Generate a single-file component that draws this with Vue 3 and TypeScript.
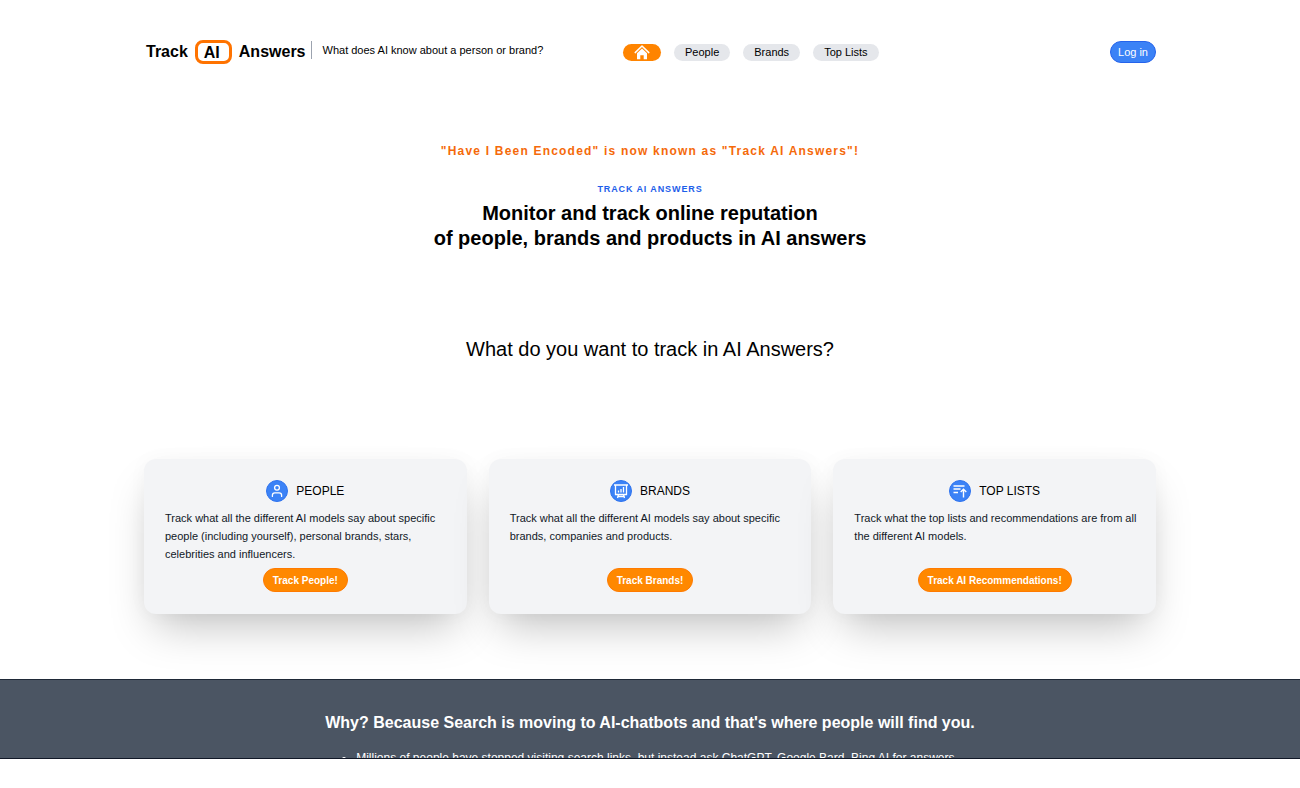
<script setup lang="ts">
interface Card {
  id: string
  title: string
  text: string
  action: string
}

const links: string[] = ['People', 'Brands', 'Top Lists']

const cards: Card[] = [
  {
    id: 'people',
    title: 'PEOPLE',
    text: 'Track what all the different AI models say about specific people (including yourself), personal brands, stars, celebrities and influencers.',
    action: 'Track People!',
  },
  {
    id: 'brands',
    title: 'BRANDS',
    text: 'Track what all the different AI models say about specific brands, companies and products.',
    action: 'Track Brands!',
  },
  {
    id: 'lists',
    title: 'TOP LISTS',
    text: 'Track what the top lists and recommendations are from all the different AI models.',
    action: 'Track AI Recommendations!',
  },
]
</script>

<template>
  <div class="page">
    <header class="header container">
      <div class="brand">
        <a class="logo" href="#"><span>Track</span><span class="logo-box">AI</span><span>Answers</span></a>
        <span class="tagline">What does AI know about a person or brand?</span>
      </div>
      <nav class="nav" aria-label="Main">
        <a class="pill pill-home" href="#" aria-label="Home">
          <svg width="16" height="16" viewBox="0 0 16 16" aria-hidden="true">
            <path d="M1.200 8.600 8 2l6.800 6.600" fill="none" stroke="#fff" stroke-width="1.500" stroke-linecap="round" stroke-linejoin="round" />
            <path d="M3 9.200 8 4.400l5 4.800V15.200H9.700v-4H6.300v4H3z" fill="#fff" />
          </svg>
        </a>
        <a v-for="link in links" :key="link" class="pill" href="#">{{ link }}</a>
      </nav>
      <button class="login" type="button">Log in</button>
    </header>

    <main>
      <section class="hero container">
        <p class="notice">"Have I Been Encoded" is now known as "Track AI Answers"!</p>
        <p class="eyebrow">TRACK AI ANSWERS</p>
        <h1>Monitor and track online reputation<br />of people, brands and products in AI answers</h1>
        <h2>What do you want to track in AI Answers?</h2>
      </section>

      <section class="cards container">
        <article v-for="card in cards" :key="card.id" class="card">
          <h3>
            <svg class="badge" viewBox="0 0 22 22" width="22" height="22" fill="none" stroke="#fff" aria-hidden="true">
              <circle cx="11" cy="11" r="10.5" fill="#3b82f6" stroke="#2f73ee" />
              <g v-if="card.id === 'people'" stroke-width="1.3" stroke-linecap="round">
                <circle cx="11" cy="7.800" r="2.400" />
                <path d="M6.400 16.400v-1.200c0-1.500 1-2.400 2.400-2.400h4.400c1.400 0 2.400.9 2.400 2.400v1.200" />
              </g>
              <g v-else-if="card.id === 'brands'" stroke-width="1.3">
                <path d="M4 5h14M5.500 5v9.500h11V5M7.500 18l1-3.500M14.500 18l-1-3.500M7.500 16.500h7" />
                <path d="M8.500 10.500v2M11 9v3.500M13.500 7v5.500" />
              </g>
              <g v-else stroke-width="1.4">
                <path d="M4.500 6h11M4.500 9h7M4.500 12.500h4.500" />
                <path d="M14.500 17.500V9.500M11.700 12.100l2.800-2.800 2.800 2.800" />
              </g>
            </svg>
            <span>{{ card.title }}</span>
          </h3>
          <p>{{ card.text }}</p>
          <button class="action" type="button">{{ card.action }}</button>
        </article>
      </section>

      <section class="why">
        <h2>Why? Because Search is moving to AI-chatbots and that's where people will find you.</h2>
        <ul>
          <li>Millions of people have stopped visiting search links, but instead ask ChatGPT, Google Bard, Bing AI for answers.</li>
        </ul>
      </section>
    </main>
  </div>
</template>

<style>
body {
  margin: 0;
  background: #fff;
}
</style>

<style scoped>
.page {
  box-sizing: border-box;
  height: calc(100vh - 29px);
  overflow: hidden;
  border-bottom: 1px solid #111827;
  font-family: "Liberation Sans", Arial, sans-serif;
  color: #000;
}

h1, h2, h3, p, ul {
  margin: 0;
}

a {
  color: inherit;
  text-decoration: none;
}

button {
  font-family: inherit;
  cursor: pointer;
}

.container {
  box-sizing: border-box;
  width: 100%;
  max-width: 1012px;
  margin: 0 auto;
}

.header {
  display: grid;
  grid-template-columns: 479px 1fr auto;
  align-items: center;
  height: 104px;
}

.brand {
  display: flex;
  align-items: center;
  padding-left: 2px;
}

.logo {
  display: flex;
  align-items: center;
  gap: 7px;
  font-size: 16px;
  font-weight: 700;
  line-height: 20px;
}

.logo-box {
  box-sizing: border-box;
  width: 37px;
  height: 24px;
  padding-left: 6px;
  border: 3px solid #ff7300;
  border-radius: 8px;
}

.tagline {
  margin: 0 0 4px 5px;
  padding-left: 11px;
  border-left: 1px solid #9ca3af;
  font-size: 11px;
  line-height: 18px;
}

.nav {
  display: flex;
  align-items: center;
  gap: 13px;
}

.pill {
  padding: 0 11px;
  border-radius: 9px;
  background: #e5e7eb;
  font-size: 11px;
  line-height: 17px;
}

.pill-home {
  display: flex;
  align-items: center;
  height: 17px;
  background: #ff8400;
}

.login {
  height: 22px;
  padding: 0 7px;
  border: 1px solid #2563eb;
  border-radius: 11px;
  background: #3b82f6;
  color: #fff;
  font-size: 11px;
}

.hero {
  padding-top: 38px;
  text-align: center;
}

.notice {
  color: #f56a0a;
  font-size: 12px;
  font-weight: 700;
  line-height: 18px;
  letter-spacing: 0.1em;
}

.eyebrow {
  margin-top: 20px;
  color: #1d5eea;
  font-size: 9px;
  font-weight: 700;
  line-height: 18px;
  letter-spacing: 0.1em;
}

h1 {
  margin-top: 3px;
  font-size: 20px;
  line-height: 25px;
}

.hero h2 {
  margin-top: 86px;
  font-size: 20px;
  font-weight: 400;
  line-height: 25px;
}

.cards {
  display: grid;
  grid-template-columns: repeat(3, 1fr);
  gap: 22px;
  padding-top: 97px;
}

.card {
  display: flex;
  flex-direction: column;
  align-items: center;
  padding: 21px 21px 22px;
  border-radius: 12px;
  background: #f3f4f6;
  box-shadow: 0 22px 44px -11px rgba(0, 0, 0, 0.25), 0 0 20px rgba(0, 0, 0, 0.03);
}

.card h3 {
  display: flex;
  align-items: center;
  gap: 8px;
  font-size: 12px;
  font-weight: 400;
  line-height: 22px;
}

.card p {
  align-self: stretch;
  margin: 7px -8px 5px 0;
  color: #111827;
  font-size: 11px;
  line-height: 18px;
}

.action {
  height: 24px;
  margin-top: auto;
  padding: 0 9px;
  border: 1px solid #ff7a00;
  border-radius: 12px;
  background: #ff8800;
  color: #fff;
  font-size: 10px;
  font-weight: 700;
}

.why {
  margin-top: 65px;
  padding: 30px 20px;
  border-top: 1px solid #1f2937;
  background: #4b5563;
  color: #fff;
}

.why h2 {
  font-size: 16px;
  line-height: 25px;
  text-align: center;
}

.why ul {
  width: fit-content;
  margin: 13px auto 0;
  padding-left: 14px;
  font-size: 12px;
  line-height: 20px;
}
</style>
